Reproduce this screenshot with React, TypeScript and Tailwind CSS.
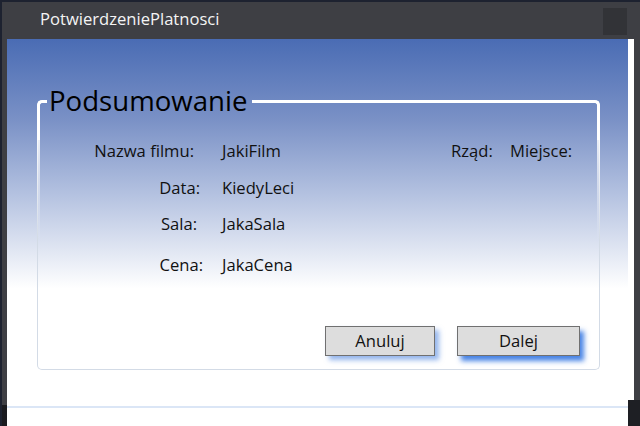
import React from "react";

const font = { fontFamily: '"Open Sans", "Noto Sans", "Liberation Sans", sans-serif' };

function Row({ label, value, className = "", labelClass = "" }: { label: string; value: string; className?: string; labelClass?: string }) {
  return (
    <div className={`flex items-center leading-[22px] ${className}`}>
      <div className="w-[156px] flex justify-end">
        <span className={`relative ${labelClass}`}>{label}</span>
      </div>
      <div className="ml-[28px]">{value}</div>
    </div>
  );
}

export default function App() {
  return (
    <div className="w-[640px] h-[426px] bg-[#1d2230] overflow-hidden text-[16.6px]" style={font}>
      <div className="flex flex-col h-full pt-[2px] pl-[2px]">
        <div className="flex flex-col flex-1 bg-[#3e3f44]">
          {/* title bar */}
          <div className="h-[37px] flex items-center relative">
            <div className="pl-[38px] text-[#f4f4f4] text-[16.6px] pb-[2px]">PotwierdzeniePlatnosci</div>
            <div className="absolute left-[601px] top-[6px] w-[24px] h-[27px] bg-[#323337]" />
          </div>
          {/* content */}
          <div className="flex flex-1">
            <div className="w-[5px] flex flex-col">
              <div className="h-[366px] bg-[#3e3f44]" />
              <div className="flex-1 bg-[#1a1b1f]" />
            </div>
            <div className="w-[621px] flex flex-col">
              <div className="h-[367px] bg-[linear-gradient(to_bottom,#4a6cb4_0%,#7a91c6_22%,#b3c1e0_42%,#ffffff_68%,#ffffff_100%)] pt-[62px] pl-[30px]">
                {/* group box */}
                <div className="relative w-[563px] h-[269px] rounded-[5px] border border-[#d3dbe6] border-t-0">
                  <div className="absolute -left-[1px] -top-[1px] w-[10px] h-[40px] rounded-tl-[5px] border-l-[3px] border-t-[3px] border-white" />
                  <div className="absolute left-[214px] -top-[1px] right-[-1px] h-[40px] rounded-tr-[5px] border-r-[3px] border-t-[3px] border-white" />
                  <div className="absolute -left-[1px] top-[20px] h-[120px] w-[3px] bg-gradient-to-b from-white to-transparent" />
                  <div className="absolute right-[-1px] top-[20px] h-[120px] w-[3px] bg-gradient-to-b from-white to-transparent" />
                  <div className="absolute left-[11px] -top-[17px] text-[27.6px] leading-[32px] text-black">Podsumowanie</div>
                  <div className="text-[#111] pt-[39px]">
                    <div className="relative">
                      <Row label="Nazwa filmu:" value="JakiFilm" />
                      <div className="absolute left-[413px] top-0 leading-[22px]">Rząd:</div>
                      <div className="absolute left-[472px] top-0 leading-[22px]">Miejsce:</div>
                    </div>
                    <Row label="Data:" value="KiedyLeci" className="mt-[15px]" labelClass="left-[6px]" />
                    <Row label="Sala:" value="JakaSala" className="mt-[14px]" labelClass="left-[3px]" />
                    <Row label="Cena:" value="JakaCena" className="mt-[19px]" labelClass="left-[9px]" />
                  </div>
                  <div className="absolute left-[287px] top-[225px] flex gap-[22px]">
                    <button className="w-[110px] h-[30px] bg-[#dddddd] border border-[#707070] text-[#111] shadow-[4px_4px_5px_rgba(60,120,220,0.55)]">Anuluj</button>
                    <button className="w-[123px] h-[30px] bg-[#dddddd] border border-[#707070] text-[#111] shadow-[4px_5px_5px_rgba(40,110,225,0.85)]">Dalej</button>
                  </div>
                </div>
              </div>
              <div className="h-[2px] bg-[#dbe6f6]" />
              <div className="flex-1 bg-white" />
            </div>
            <div className="w-[6px] flex flex-col">
              <div className="h-[361px] bg-white" />
              <div className="flex-1 bg-[#1e1f24]" />
            </div>
            <div className="flex-1 flex flex-col">
              <div className="h-[361px] bg-[#3e3f44]" />
              <div className="flex-1 bg-[#1e1f24]" />
            </div>
          </div>
        </div>
      </div>
    </div>
  );
}
